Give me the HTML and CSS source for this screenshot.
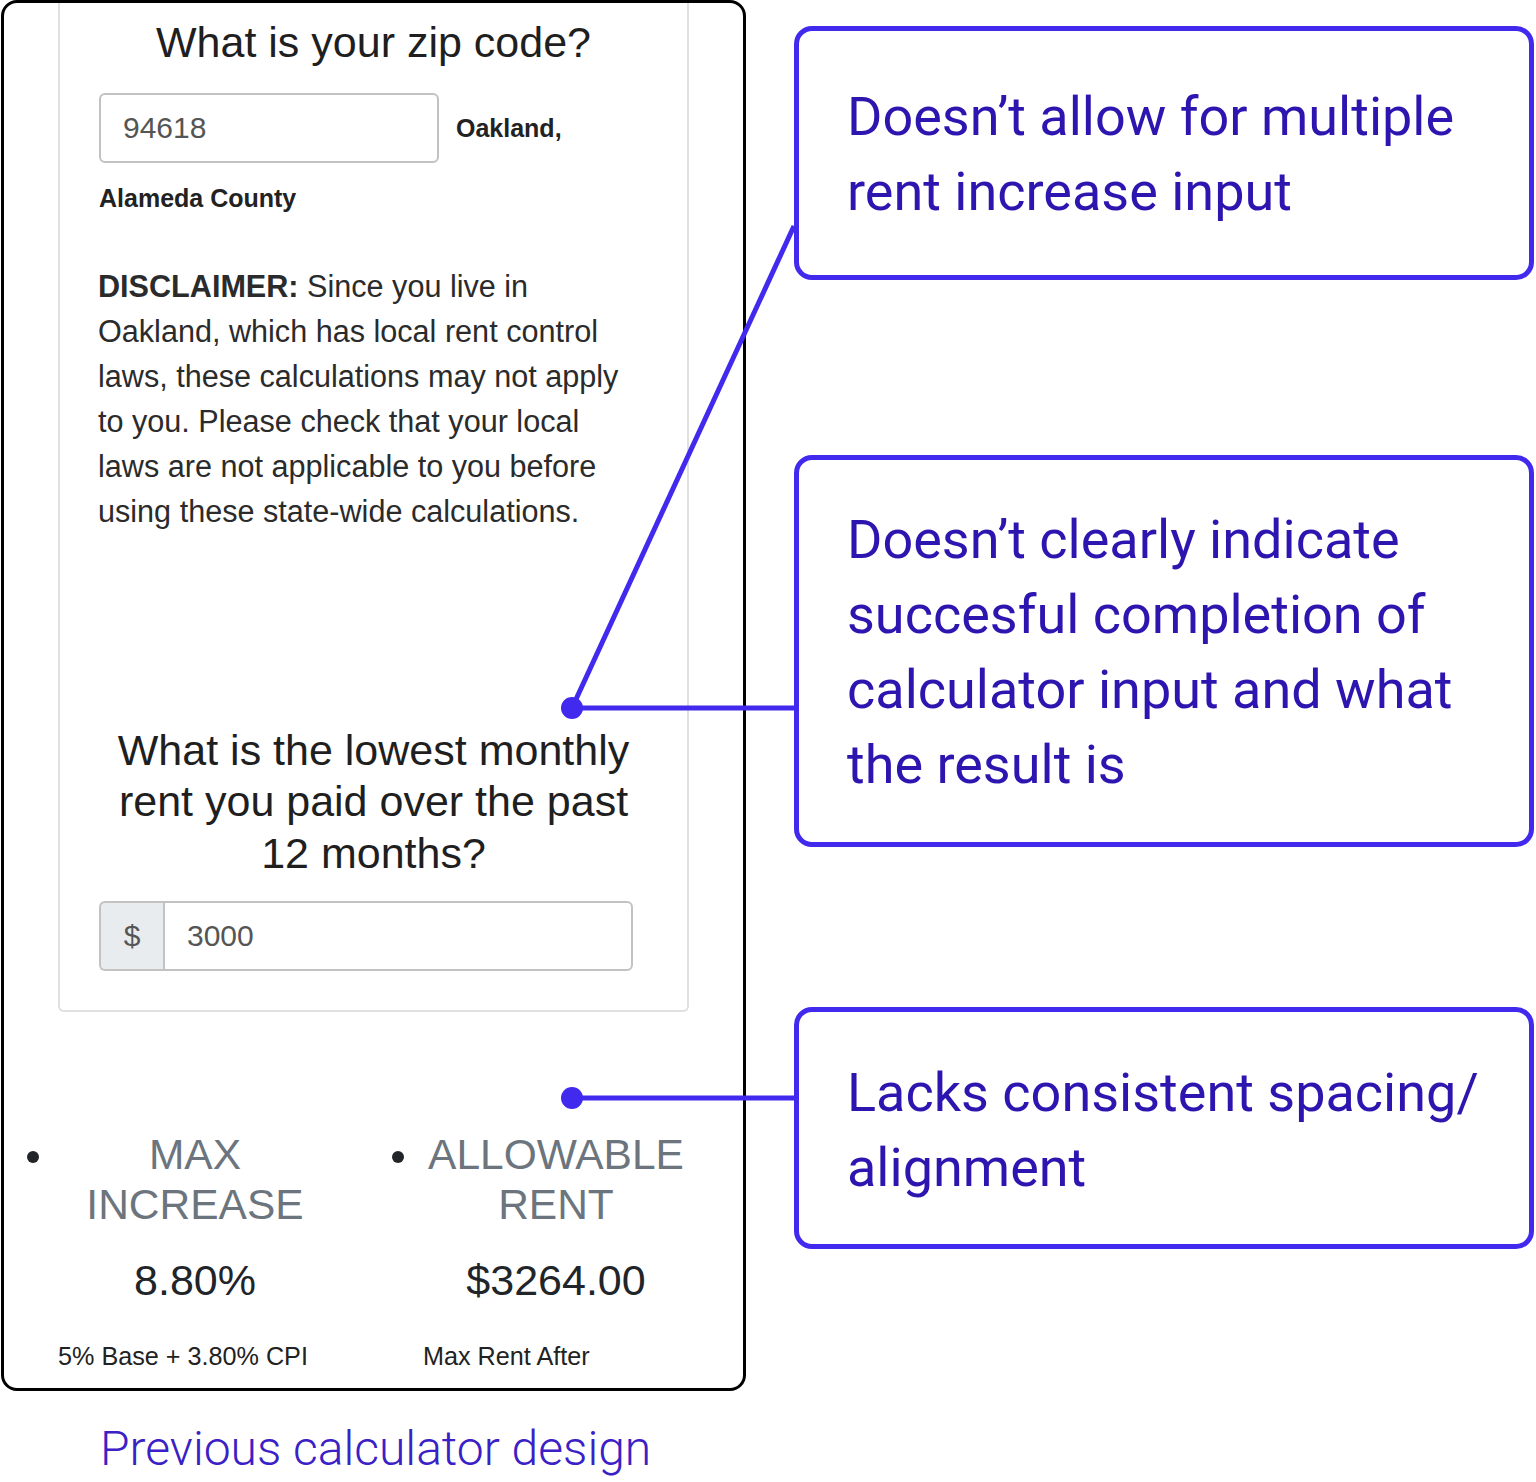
FILE: index.html
```html
<!DOCTYPE html>
<html lang="en">
<head>
<meta charset="utf-8">
<title>Previous calculator design</title>
<link rel="stylesheet" href="styles.css">
</head>
<body>
<div class="canvas">
  <div class="left-col">
    <div class="phone">
      <div class="card">
        <h2 class="question q-zip">What is your zip code?</h2>
        <div class="zip-row">
          <div class="field zip-field">94618</div>
          <span class="place">Oakland,</span>
        </div>
        <div class="place county">Alameda County</div>
        <p class="disclaimer"><b>DISCLAIMER:</b> Since you live in<br>Oakland, which has local rent control<br>laws, these calculations may not apply<br>to you. Please check that your local<br>laws are not applicable to you before<br>using these state-wide calculations.</p>
        <h2 class="question q-rent">What is the lowest monthly<br>rent you paid over the past<br>12 months?</h2>
        <div class="input-group">
          <span class="addon">$</span>
          <span class="field rent-field">3000</span>
        </div>
      </div>
      <ul class="results">
        <li class="result result-a">
          <div class="label">MAX<br>INCREASE</div>
          <div class="value">8.80%</div>
          <div class="note">5% Base + 3.80% CPI</div>
        </li>
        <li class="result result-b">
          <div class="label">ALLOWABLE<br>RENT</div>
          <div class="value">$3264.00</div>
          <div class="note">Max Rent After</div>
        </li>
      </ul>
    </div>
    <p class="caption">Previous calculator design</p>
  </div>
  <div class="notes-col">
    <div class="callout callout-1">Doesn’t allow for multiple<br>rent increase input</div>
    <div class="callout callout-2">Doesn’t clearly indicate<br>succesful completion of<br>calculator input and what<br>the result is</div>
    <div class="callout callout-3">Lacks consistent spacing/<br>alignment</div>
  </div>
  <svg class="connectors" width="1536" height="1482" viewBox="0 0 1536 1482" aria-hidden="true">
    <g stroke="#4129ee" stroke-width="5" fill="none" stroke-linecap="butt">
      <line x1="572" y1="708" x2="794" y2="226"/>
      <line x1="572" y1="708" x2="797" y2="708"/>
      <line x1="572" y1="1098" x2="797" y2="1098"/>
    </g>
    <circle cx="572" cy="708" r="11" fill="#4129ee"/>
    <circle cx="572" cy="1098" r="11" fill="#4129ee"/>
  </svg>
</div>
</body>
</html>
```
FILE: styles.css
```css
* { box-sizing: border-box; }

html, body {
  margin: 0;
  padding: 0;
  background: #ffffff;
}

.canvas {
  position: relative;
  width: 1536px;
  height: 1482px;
  display: flex;
  align-items: flex-start;
  overflow: hidden;
}

.left-col {
  width: 746px;
  flex: none;
}

.phone {
  margin-left: 1px;
  width: 745px;
  height: 1391px;
  border: 3px solid #000000;
  border-radius: 16px;
  overflow: hidden;
  font-family: "Liberation Sans", Arial, sans-serif;
  color: #222222;
}

.card {
  margin: 0 54px;
  border: 2px solid #e0e0e0;
  border-top: none;
  border-radius: 0 0 6px 6px;
  padding: 14px 39px 39px 39px;
}

.question {
  margin: 0;
  font-size: 43px;
  font-weight: normal;
  line-height: 1.2;
  text-align: center;
  color: #1f1f1f;
}

.q-zip { margin-bottom: 24px; }

.zip-row {
  display: flex;
  align-items: center;
  gap: 17px;
}

.field {
  display: flex;
  align-items: center;
  height: 70px;
  font-size: 30px;
  color: #555555;
  background: #ffffff;
}

.zip-field {
  width: 340px;
  border: 2px solid #c2c2c2;
  border-radius: 6px;
  padding-left: 22px;
}

.place {
  font-size: 25px;
  font-weight: bold;
  color: #222222;
  line-height: 30px;
}

.county {
  margin-top: 20px;
}

.disclaimer {
  margin: 51px 0 0 -1px;
  font-size: 30.6px;
  line-height: 45px;
  color: #2b2b2b;
  white-space: nowrap;
}

.q-rent {
  margin-top: 191px;
}

.input-group {
  margin-top: 22px;
  display: flex;
  width: 534px;
  height: 70px;
}

.addon {
  width: 64px;
  flex: none;
  display: flex;
  align-items: center;
  justify-content: center;
  font-size: 30px;
  color: #555555;
  background: #e9ecef;
  border: 2px solid #c2c2c2;
  border-right: none;
  border-radius: 6px 0 0 6px;
}

.rent-field {
  flex: 1;
  border: 2px solid #c2c2c2;
  border-radius: 0 6px 6px 0;
  padding-left: 22px;
}

.results {
  margin: 118px 0 0 0;
  padding: 0 0 0 54px;
  display: grid;
  grid-template-columns: 274px 266px;
  column-gap: 91px;
  color: #212529;
}

.result {
  display: list-item;
  list-style: disc outside;
  font-size: 42.5px;
  line-height: 50px;
}

.result::marker {
  font-size: 40px;
  color: #212529;
}

.label {
  font-size: 42.5px;
  line-height: 50px;
  text-align: center;
  color: #6c757d;
}

.value {
  margin-top: 25px;
  font-size: 43px;
  line-height: 50px;
  text-align: center;
  color: #212529;
}

.note {
  margin-top: 37px;
  font-size: 25.2px;
  line-height: 28px;
  white-space: nowrap;
  color: #222222;
}

.caption {
  margin: 28px 0 0 0;
  padding-left: 100px;
  font-family: Roboto, "Noto Sans", sans-serif;
  font-weight: 300;
  font-size: 48px;
  line-height: 60px;
  color: #3a20c6;
}

.notes-col {
  margin-left: 48px;
  padding-top: 26px;
  width: 740px;
  flex: none;
  display: flex;
  flex-direction: column;
}

.callout {
  border: 5px solid #4129ee;
  border-radius: 18px;
  padding-left: 48px;
  font-family: Roboto, "Noto Sans", sans-serif;
  font-size: 54px;
  line-height: 75px;
  color: #2d15b0;
  background: #ffffff;
  white-space: nowrap;
}

.callout-1 {
  height: 254px;
  padding-top: 48px;
}

.callout-2 {
  margin-top: 175px;
  height: 392px;
  padding-top: 42px;
}

.callout-3 {
  margin-top: 160px;
  height: 242px;
  padding-top: 43px;
}

.connectors {
  position: absolute;
  left: 0;
  top: 0;
  pointer-events: none;
}
```
